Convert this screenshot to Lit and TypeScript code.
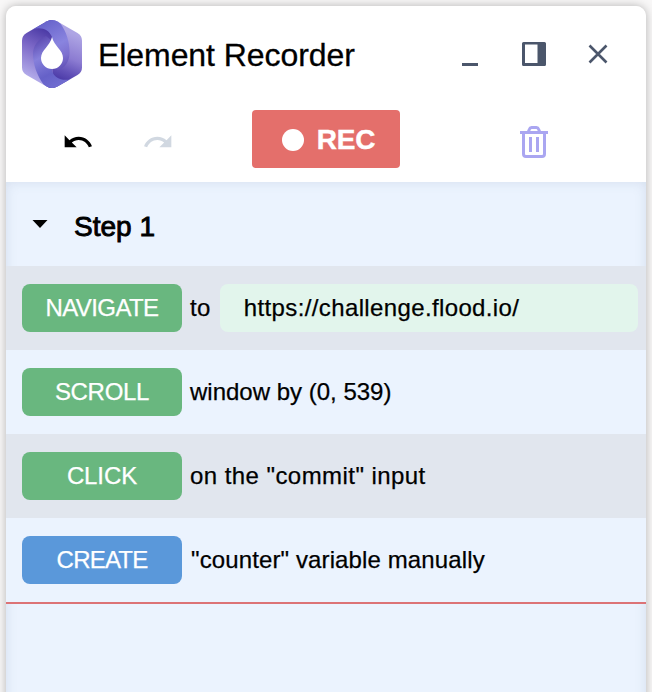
import { LitElement, html, css, nothing } from "lit";
import { customElement } from "lit/decorators.js";
import { classMap } from "lit/directives/class-map.js";

interface Action {
  name: string;
  text: string;
  value?: string;
  kind: string;
}

const actions: Action[] = [
  { name: "NAVIGATE", text: "to", value: "https://challenge.flood.io/", kind: "navigate" },
  { name: "SCROLL", text: "window by (0, 539)", kind: "scroll" },
  { name: "CLICK", text: 'on the "commit" input', kind: "click" },
  { name: "CREATE", text: '"counter" variable manually', kind: "create" },
];

@customElement("recorder-logo")
class RecorderLogo extends LitElement {
  static styles = css`
    :host { display: block; width: 60px; height: 68px; }
    svg { display: block; }
  `;
  render() {
    return html`<svg width="60" height="68" viewBox="0 0 60 68">
      <defs>
        <clipPath id="hex"><path d="M25 1.300Q30-1.200 35 1.300L55.500 13Q60 15.700 60 20.500V47.500Q60 52.300 55.500 55L35 66.700Q30 69.200 25 66.700L4.500 55Q0 52.300 0 47.500V20.500Q0 15.700 4.500 13Z" /></clipPath>
        <linearGradient id="left" gradientUnits="userSpaceOnUse" x1="26" y1="10" x2="4" y2="54"><stop offset="0" stop-color="#4938a4" /><stop offset=".45" stop-color="#7c68c7" /><stop offset="1" stop-color="#b0a8e8" /></linearGradient>
        <linearGradient id="right" gradientUnits="userSpaceOnUse" x1="52" y1="14" x2="34" y2="58"><stop offset="0" stop-color="#aea5e4" /><stop offset=".5" stop-color="#8c7cd2" /><stop offset=".8" stop-color="#6251b8" /><stop offset="1" stop-color="#4b3aa7" /></linearGradient>
        <linearGradient id="top" gradientUnits="userSpaceOnUse" x1="20" y1="2" x2="44" y2="50"><stop offset="0" stop-color="#6763cb" /><stop offset=".5" stop-color="#8984df" /><stop offset=".75" stop-color="#7d70cf" /><stop offset="1" stop-color="#5a49b1" /></linearGradient>
        <linearGradient id="bottom" gradientUnits="userSpaceOnUse" x1="20" y1="2" x2="44" y2="50"><stop offset="0" stop-color="#726ed1" /><stop offset=".3" stop-color="#6561c8" /><stop offset=".65" stop-color="#8680db" /><stop offset="1" stop-color="#5a48af" /></linearGradient>
      </defs>
      <g clip-path="url(#hex)">
        <path fill="url(#right)" d="M30-2H62V70H30Z" />
        <path fill="url(#left)" d="M-2-2H30.500V70H-2Z" />
        <path fill="url(#right)" d="M30 34V70H24Z" />
        <path fill="url(#top)" d="M5 12L30-3 38 3C45 12 48 24 47.500 34C47 42 43 48 36 50L30 45V17C27 8 15 5 5 12Z" />
        <path fill="url(#bottom)" transform="rotate(180 30 34)" d="M5 12L30-3 38 3C45 12 49 24 49 34C49 42 44 49 36 52L30 47V17C27 8 15 5 5 12Z" />
      </g>
      <path fill="#fff" d="M30 17C32 26 41 30 41 38A11 11 0 0 1 19 38C19 30 28 26 30 17Z" />
    </svg>`;
  }
}

@customElement("action-row")
class ActionRow extends LitElement {
  static properties = { action: { attribute: false } };
  declare action: Action;
  static styles = css`
    :host { display: block; }
    .row { display: flex; align-items: center; height: 84px; padding: 0 8px 0 16px; box-sizing: border-box; font-size: 24px; white-space: pre; -webkit-text-stroke: 0.25px currentColor; }
    .badge { width: 160px; height: 48px; border-radius: 8px; background: #69b77f; color: #fff; line-height: 48px; text-align: center; letter-spacing: -0.6px; flex: none; }
    .text { margin-left: 8px; line-height: 48px; }
    .value { flex: 1; margin-left: 9px; height: 48px; line-height: 48px; padding-left: 24px; border-radius: 8px; background: #e2f5ec; letter-spacing: 0.37px; }
    .navigate .text { letter-spacing: 0.4px; }
    .scroll .badge { letter-spacing: -0.3px; }
    .click .badge { letter-spacing: -0.1px; }
    .click .text { letter-spacing: 0.44px; }
    .create .badge { background: #5a98da; letter-spacing: -0.8px; }
    .create .text { margin-left: 9px; letter-spacing: 0.12px; }
  `;
  render() {
    const a = this.action;
    return html`<div class="row ${a.kind}"><span class="badge">${a.name}</span><span class="text">${a.text}</span>${a.value ? html`<span class="value">${a.value}</span>` : nothing}</div>`;
  }
}

@customElement("app-root")
class AppRoot extends LitElement {
  static styles = css`
    :host { display: block; box-sizing: border-box; height: 692px; padding: 6px 6px 0; overflow: hidden; background: #f8f7f7; font-family: "Liberation Sans", Arial, sans-serif; color: #000; }
    .window { height: 700px; border-radius: 10px 10px 0 0; overflow: hidden; background: #fff; }
    .shade { border-radius: 10px 10px 0 0; box-shadow: 0 0 10px rgba(0, 0, 0, 0.28); }
    .titlebar { display: flex; align-items: center; height: 96px; padding: 0 36px 0 16px; box-sizing: border-box; }
    .title { font-size: 32px; line-height: 40px; letter-spacing: -0.07px; margin: 2px 0 0 16px; flex: 1; white-space: pre; -webkit-text-stroke: 0.3px #000; }
    .controls { display: flex; align-items: center; gap: 40px; color: #4b566b; }
    svg { display: block; }
    .toolbar { display: flex; align-items: center; height: 80px; padding: 0 96px 6px 56px; box-sizing: border-box; }
    .undo { margin-top: 5px; }
    .redo { margin: 5px 0 0 48px; color: #d1d8e1; }
    .rec { display: flex; align-items: center; justify-content: center; gap: 13px; width: 148px; height: 58px; margin-left: 78px; border: 0; padding: 2px 0 0 5px; box-sizing: border-box; border-radius: 4px; background: #e46f6b; color: #fff; font: bold 28px/56px "Liberation Sans", Arial, sans-serif; letter-spacing: -0.2px; -webkit-text-stroke: 0.4px #fff; }
    .dot { width: 22px; height: 22px; border-radius: 50%; background: #fff; }
    .trash { margin-left: auto; margin-top: 5px; color: #aaa6f1; }
    .steps { height: 524px; background: #ebf3fe; box-shadow: inset 0 0 12px rgba(90, 105, 140, 0.15); }
    .step { display: flex; align-items: center; height: 84px; padding: 0 26px; box-sizing: border-box; }
    .name { margin-left: 26px; padding-top: 5px; font-size: 28px; line-height: 32px; -webkit-text-stroke: 0.9px #000; }
    action-row { background: #ebf3fe; }
    action-row.odd { background: #e1e6ee; }
    .cursor { height: 2px; background: #dc7376; }
  `;
  render() {
    return html`<div class="shade"><main class="window">
      <header class="titlebar">
        <recorder-logo></recorder-logo>
        <span class="title">Element Recorder</span>
        <div class="controls">
          <svg width="24" height="24" viewBox="0 0 24 24"><path fill="currentColor" d="M4 21h16v3H4z" /></svg>
          <svg width="24" height="24" viewBox="0 0 24 24"><path fill="currentColor" fill-rule="evenodd" d="M1.500 0h21a1.500 1.500 0 0 1 1.500 1.500v21a1.500 1.500 0 0 1-1.500 1.500h-21a1.500 1.500 0 0 1-1.500-1.500v-21a1.500 1.500 0 0 1 1.500-1.500zM3 2.500v18.500h12.500V2.500z" /></svg>
          <svg width="24" height="24" viewBox="0 0 24 24"><path stroke="currentColor" stroke-width="2.600" d="M3.500 3.500L20.500 20.500M20.500 3.500L3.500 20.500" /></svg>
        </div>
      </header>
      <div class="toolbar">
        <svg class="undo" width="32" height="32" viewBox="0 0 24 24"><path fill="currentColor" d="M12.500 8c-2.650 0-5.050.99-6.900 2.600L2 7v9h9l-3.620-3.620c1.390-1.160 3.160-1.880 5.120-1.880 3.540 0 6.550 2.310 7.600 5.500l2.370-.78C21.080 11.030 17.150 8 12.500 8z" /></svg>
        <svg class="redo" width="32" height="32" viewBox="0 0 24 24"><path fill="currentColor" d="M18.400 10.600C16.550 8.990 14.150 8 11.500 8c-4.650 0-8.580 3.030-9.960 7.220L3.900 16c1.050-3.190 4.050-5.500 7.600-5.500 1.950 0 3.730.72 5.120 1.880L13 16h9V7l-3.600 3.600z" /></svg>
        <button class="rec"><span class="dot"></span>REC</button>
        <svg class="trash" width="32" height="32" viewBox="0 0 32 32"><g fill="none" stroke="currentColor" stroke-width="3"><path d="M2 6.500H30M5.500 7V28Q5.500 30.500 8 30.500H24Q26.500 30.500 26.500 28V7" /><path d="M10 6.500L11.500 3Q12 1.500 13.500 1.500H18.500Q20 1.500 20.500 3L22 6.500M12.500 11V26M19.500 11V26" /></g></svg>
      </div>
      <section class="steps">
        <div class="step">
          <svg width="16" height="8" viewBox="0 0 16 8"><path d="M.5 0h15L8 8z" /></svg>
          <span class="name">Step 1</span>
        </div>
        ${actions.map((a, i) => html`<action-row class=${classMap({ odd: i % 2 === 0 })} .action=${a}></action-row>`)}
        <div class="cursor"></div>
      </section>
    </main></div>`;
  }
}
